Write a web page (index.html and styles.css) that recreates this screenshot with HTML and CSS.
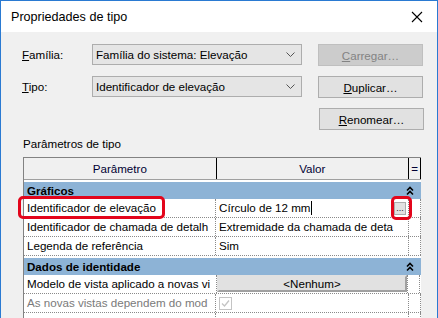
FILE: index.html
```html
<!DOCTYPE html>
<html lang="pt">
<head>
    <meta charset="UTF-8">
    <title>Propriedades de tipo</title>
    <link rel="stylesheet" href="styles.css">
</head>
<body>
<div class="dialog">
    <div class="titlebar">
        <span class="title">Propriedades de tipo</span>
        <svg class="close" width="12" height="12" viewBox="0 0 12 12"><path d="M1 1 L11 11 M11 1 L1 11" stroke="#000" stroke-width="1.1" fill="none"/></svg>
    </div>

    <div class="content">
        <div class="field-row">
            <span class="field-label"><u>F</u>amília:</span>
            <div class="combo">
                <span>Família do sistema: Elevação</span>
                <svg class="chev" width="9" height="5" viewBox="0 0 9 5"><path d="M0.5 0.5 L4.5 4.5 L8.5 0.5" stroke="#555" fill="none"/></svg>
            </div>
            <button class="btn" disabled><u>C</u>arregar…</button>
        </div>
        <div class="field-row">
            <span class="field-label"><u>T</u>ipo:</span>
            <div class="combo">
                <span>Identificador de elevação</span>
                <svg class="chev" width="9" height="5" viewBox="0 0 9 5"><path d="M0.5 0.5 L4.5 4.5 L8.5 0.5" stroke="#555" fill="none"/></svg>
            </div>
            <button class="btn"><u>D</u>uplicar…</button>
        </div>
        <div class="field-row right">
            <button class="btn"><u>R</u>enomear…</button>
        </div>

        <div class="section-label">Parâmetros de tipo</div>

        <div class="grid-wrap">
            <div class="grid">
                <div class="grid-head">
                    <div class="hcell">Parâmetro</div>
                    <div class="hcell">Valor</div>
                    <div class="hcell eq">=</div>
                </div>

                <div class="cat">
                    <span>Gráficos</span>
                    <svg class="collapse" width="8" height="10" viewBox="0 0 8 10"><path d="M1 4.5 L4 1.5 L7 4.5 M1 8.5 L4 5.5 L7 8.5" stroke="#000" stroke-width="1.6" fill="none"/></svg>
                </div>
                <div class="prow">
                    <div class="pname">Identificador de elevação</div>
                    <div class="pval">Círculo de 12 mm<span class="caret"></span><span class="dots">...</span></div>
                    <div class="peq"></div>
                </div>
                <div class="prow">
                    <div class="pname">Identificador de chamada de detalh</div>
                    <div class="pval">Extremidade da chamada de deta</div>
                    <div class="peq"></div>
                </div>
                <div class="prow">
                    <div class="pname">Legenda de referência</div>
                    <div class="pval">Sim</div>
                    <div class="peq"></div>
                </div>

                <div class="cat">
                    <span>Dados de identidade</span>
                    <svg class="collapse" width="8" height="10" viewBox="0 0 8 10"><path d="M1 4.5 L4 1.5 L7 4.5 M1 8.5 L4 5.5 L7 8.5" stroke="#000" stroke-width="1.6" fill="none"/></svg>
                </div>
                <div class="prow">
                    <div class="pname">Modelo de vista aplicado a novas vi</div>
                    <div class="pval btn-cell"><span class="none-btn">&lt;Nenhum&gt;</span></div>
                    <div class="peq"></div>
                </div>
                <div class="prow disabled">
                    <div class="pname">As novas vistas dependem do mod</div>
                    <div class="pval">
                        <svg class="check" width="13" height="13" viewBox="0 0 13 13"><rect x="0.5" y="0.5" width="12" height="12" fill="#fff" stroke="#c4c4c4"/><path d="M3 6.5 L5.5 9 L10 3.5" stroke="#c4c4c4" stroke-width="1.3" fill="none"/></svg>
                    </div>
                    <div class="peq"></div>
                </div>
                <div class="prow">
                    <div class="pname"></div>
                    <div class="pval"></div>
                    <div class="peq"></div>
                </div>
            </div>
            <div class="mark mark-name"></div>
            <div class="mark mark-btn"></div>
        </div>
    </div>
</div>
</body>
</html>
```

FILE: styles.css
```css
body {
    margin: 0;
    font-family: "Liberation Sans", Arial, sans-serif;
    font-size: 11.6px;
    color: #000;
}

.dialog {
    width: 438px;
    height: 318px;
    box-sizing: border-box;
    border: 1px solid #2a7ad2;
    border-bottom: none;
    background: #f0f0f0;
    overflow: hidden;
}

.titlebar {
    height: 30px;
    background: #fff;
    display: flex;
    align-items: center;
    justify-content: space-between;
    padding: 1px 14px 0 10px;
}

.title {
    font-size: 12.6px;
}

.content {
    padding: 12px 0 0 21px;
}

.field-row {
    display: flex;
    align-items: flex-start;
    height: 22px;
    margin-bottom: 10px;
}

.field-row.right {
    justify-content: flex-end;
    padding-right: 13px;
    margin-bottom: 0;
}

.field-label {
    width: 70px;
    line-height: 21px;
}

.combo {
    width: 210px;
    height: 21px;
    box-sizing: border-box;
    border: 1px solid #adadad;
    background: #e5e5e5;
    display: flex;
    align-items: center;
    justify-content: space-between;
    padding: 0 6px 0 3px;
}

.btn {
    margin-left: 16px;
    width: 105px;
    height: 22px;
    box-sizing: border-box;
    border: 1px solid #adadad;
    background: #e1e1e1;
    font-family: inherit;
    font-size: 11.6px;
    color: #000;
    padding: 0;
}

.btn:disabled {
    background: #cccccc;
    border-color: #bfbfbf;
    color: #838383;
}

.section-label {
    margin-top: 7px;
    line-height: 14px;
    padding-left: 1px;
}

.grid-wrap {
    position: relative;
    margin-top: 6px;
    margin-left: 1px;
    width: 414px;
    border-right: 1px solid #fbfbfb;
    height: 170px;
}

.grid {
    width: 398px;
    background: #fff;
    border-left: 1px solid #828282;
    border-top: 1px solid #828282;
    box-sizing: border-box;
    height: 170px;
}

.grid-head {
    display: flex;
    height: 21px;
    background: #f0f0f0;
    border-bottom: 1px solid #a0a0a0;
}

.hcell {
    width: 193px;
    text-align: center;
    line-height: 21px;
    border-right: 1px solid #000;
    color: #000033;
}

.hcell.eq {
    width: 11px;
    border-right: 1px solid #000;
}

.cat {
    margin-top: 2px;
    height: 17px;
    background: #8db3d6;
    display: flex;
    align-items: center;
    justify-content: space-between;
    padding: 0 7px 0 3px;
    font-weight: bold;
}

.prow {
    display: flex;
    height: 18px;
    border-bottom: 1px dotted #8a8a8a;
}

.pname, .pval {
    border-right: 1px dotted #8a8a8a;
    padding-left: 3px;
    line-height: 18px;
    white-space: nowrap;
    overflow: hidden;
    position: relative;
}

.pname {
    width: 189px;
}

.pval {
    width: 190px;
}

.peq {
    width: 11px;
    border-right: 1px dotted #8a8a8a;
}

.caret {
    display: inline-block;
    width: 1px;
    height: 14px;
    background: #000;
    vertical-align: -3px;
}

.dots {
    position: absolute;
    right: 2px;
    top: 3px;
    width: 10px;
    height: 11px;
    border: 1px solid #adadad;
    background: #e1e1e1;
    font-size: 9px;
    line-height: 10px;
    text-align: center;
    color: #222;
}

.btn-cell {
    padding-left: 0;
}

.none-btn {
    display: block;
    height: 17px;
    box-sizing: border-box;
    border: 2px solid #a0a0a0;
    border-top-color: #e1e1e1;
    border-left-color: #e1e1e1;
    background: #e1e1e1;
    text-align: center;
    line-height: 13px;
}

.disabled .pname {
    color: #7a7a7a;
}

.check {
    display: block;
    margin-top: 3px;
}

.mark {
    position: absolute;
    border: 3px solid #e3051b;
    border-radius: 5px;
}

.mark-name {
    left: -5px;
    top: 39px;
    width: 141px;
    height: 17px;
}

.mark-btn {
    left: 368px;
    top: 39px;
    width: 15px;
    height: 18px;
}
```
